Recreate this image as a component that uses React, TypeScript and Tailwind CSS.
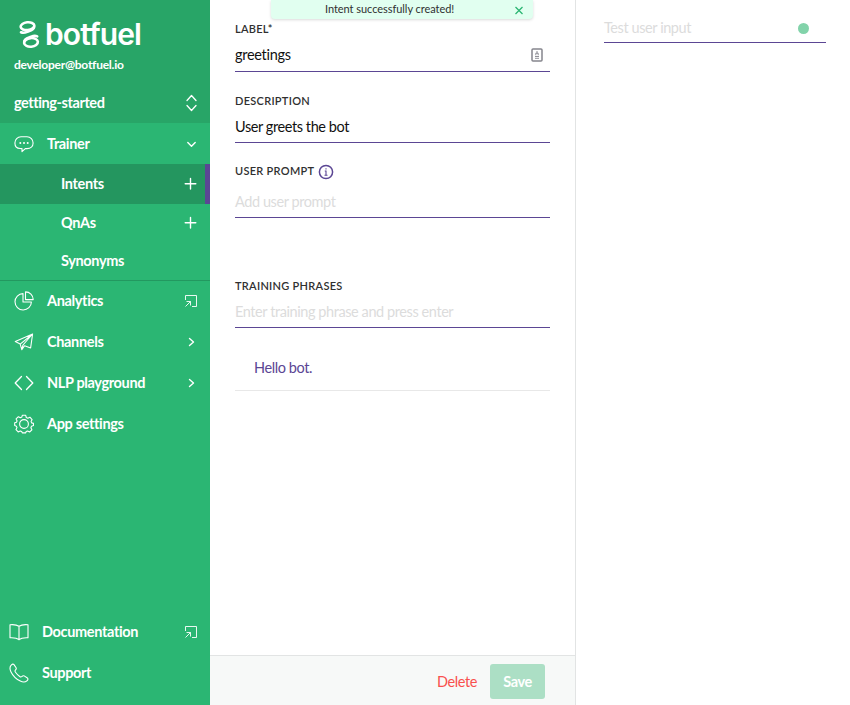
import type { ReactNode } from 'react';

const LATO = "font-['Lato',sans-serif]";

function Icon({ size = 20, view = 20, children, width = 1.1 }: { size?: number; view?: number; children: ReactNode; width?: number }) {
  return (
    <svg width={size} height={size} viewBox={`0 0 ${view} ${view}`} fill="none" stroke="currentColor" strokeWidth={width} strokeLinecap="round" strokeLinejoin="round" className="block shrink-0">
      {children}
    </svg>
  );
}

const Chat = () => (
  <Icon>
    <path d="M6.200 14.500C3 14.300.9 12 .9 8.900c0-3.500 2.600-6.100 6.100-6.100h6c3.500 0 6.100 2.600 6.100 6.100s-2.600 5.700-6.100 5.700h-1.700L8 17.700v-3.100z" />
    <path d="M6.300 8.900h.01M10 8.900h.01M13.700 8.900h.01" strokeWidth="2" />
  </Icon>
);
const Pie = () => (
  <Icon>
    <path d="M9 2.600A8.200 8.200 0 1 0 17.400 11H9z" />
    <path d="M11.500.9v7.700h7.700A7.700 7.700 0 0 0 11.500.9z" />
  </Icon>
);
const Plane = () => (
  <Icon>
    <path d="M18.600 2 1.300 9.600l4.900 2.500L18.600 2l-2 14-6-2.300-2.800 3.900-1.600-5.500M18.600 2 9 13l-1.200 4.600" />
  </Icon>
);
const Code = () => (
  <Icon width={1.3}>
    <path d="M7.500 3.500 1.200 10l6.300 6.500M12.500 3.500l6.300 6.500-6.300 6.500" />
  </Icon>
);
const Gear = () => (
  <Icon>
    <circle cx="10" cy="10" r="4.400" />
    <path d="M8.300 1.300h3.400l.6 2.200 1.500.7 2.100-1 2.200 2.400-1 2 .5 1.300 1.900.5v2.200l-2 .7-.6 1.400 1 2.100-2.300 2.200-2-1-1.400.6-.6 1.300H8.300l-.6-1.400-1.500-.6-2 1-2.200-2.300 1-2-.6-1.400-1.700-.6V8.800L2.500 8.300l.6-1.400-1-2L4.400 2.700l2 1 1.400-.6z" />
  </Icon>
);
const Book = () => (
  <Icon>
    <path d="M10 4.200C7.700 2.600 4.500 2.400 1 2.700v13.100c3.600-.2 6.900.1 9 1.900 2.100-1.800 5.400-2.100 9-1.900V2.700c-3.500-.3-6.700-.1-9 1.500zM10 4.200v13.500" />
  </Icon>
);
const Phone = () => (
  <Icon>
    <path d="M2.200 2.200C3.200 1 4.200.7 5 1.600l2.100 3.200c.6 1-.1 1.700-.8 2.500-.6.7-.3 1.300.2 2 1.100 1.600 2.500 3 4.200 4.200.7.500 1.300.7 2 .1.800-.7 1.500-1.300 2.500-.7l3.200 2.100c.9.700.6 1.800-.5 2.800-1.600 1.400-3.900 1.600-6.600.3C7 16 4 13 1.900 8.700 .6 6 .8 3.700 2.200 2.200z" />
  </Icon>
);
const External = () => (
  <Icon size={14} view={14} width={0.9}>
    <path d="M1.500 6V1.500h11v11H8M1.500 12.500l5-5M2.500 7.500h4v4" strokeLinecap="butt" strokeLinejoin="miter" />
  </Icon>
);
const Right = () => (
  <Icon size={14} view={14} width={1.4}>
    <path d="m5.500 3.500 4 3.500-4 3.500" />
  </Icon>
);
const Down = () => (
  <Icon size={14} view={14} width={1.4}>
    <path d="m3.800 5.500 3.700 3.700 3.700-3.700" />
  </Icon>
);
const Plus = () => (
  <Icon size={14} view={14} width={1.4}>
    <path d="M7.500 1.500v10.500M2.200 6.800h10.600" />
  </Icon>
);

function NavRow({ icon, label, end, className = 'pl-[14px] pb-[2px]' }: { icon: ReactNode; label: string; end?: ReactNode; className?: string }) {
  return (
    <div className={`flex h-[41px] items-center gap-[13px] pr-3 ${className}`}>
      {icon}
      <span className="flex-1 leading-5">{label}</span>
      {end}
    </div>
  );
}

function SubRow({ label, plus = false, active = false }: { label: string; plus?: boolean; active?: boolean }) {
  return (
    <div className={`flex items-center justify-between pl-[61px] ${active ? 'h-10 border-r-[5px] border-[#5b4694] bg-[#24965f] pr-2' : 'h-[38px] pr-[13px]'}`}>
      <span className="leading-5">{label}</span>
      {plus && <Plus />}
    </div>
  );
}

function Logo() {
  return (
    <div className="flex h-[30px] items-center">
      <svg width="22" height="30" viewBox="0 0 22 30" fill="none" stroke="#fff" strokeWidth="2.600" strokeLinecap="round" className="shrink-0">
        <ellipse cx="9.500" cy="7.200" rx="6.900" ry="3.900" transform="rotate(-6 9.500 7.200)" />
        <path d="M16.200 8c-.3 3.200-3.600 3.500-7 4.900-2.200.9-4.300 1.200-6.200.4" />
        <ellipse cx="13" cy="23.400" rx="6.900" ry="4.300" transform="rotate(-6 13 23.400)" />
        <path d="M6.200 22.600c.3-3.200 3.600-3.500 7-4.900 2.200-.9 4.200-1.100 6-.3" />
      </svg>
      <span className="ml-[5px] font-['Inter',sans-serif] text-[30px] leading-[30px] font-semibold tracking-[-0.9px]">botfuel</span>
    </div>
  );
}

function Sidebar() {
  return (
    <aside className="flex h-full w-[210px] shrink-0 flex-col bg-[#2bb673] text-[14.5px] font-bold tracking-[-0.35px] text-white">
      <header className="flex h-[123px] flex-col bg-[#28a567] pt-[19px]">
        <div className="pl-[18px]"><Logo /></div>
        <div className="mt-[8px] pl-[14px] text-[12px] leading-4 tracking-[-0.25px]">developer@botfuel.io</div>
        <div className="mt-5 flex items-center justify-between pr-3 pl-[14px] leading-5 tracking-[-0.42px]">
          <span>getting-started</span>
          <svg width="13" height="18" viewBox="0 0 13 18" fill="none" stroke="white" strokeWidth="1.300" strokeLinecap="round" strokeLinejoin="round"><path d="m2 6.500 4.500-5 4.500 5M2 11.500l4.500 5 4.500-5" /></svg>
        </div>
      </header>
      <nav>
        <NavRow icon={<Chat />} label="Trainer" end={<Down />} className="pl-[14px]" />
        <div className="h-[117px] border-b border-[#239860]">
          <SubRow label="Intents" plus active />
          <SubRow label="QnAs" plus />
          <SubRow label="Synonyms" />
        </div>
        <NavRow icon={<Pie />} label="Analytics" end={<External />} />
        <NavRow icon={<Plane />} label="Channels" end={<Right />} />
        <NavRow icon={<Code />} label="NLP playground" end={<Right />} />
        <NavRow icon={<Gear />} label="App settings" />
      </nav>
      <footer className="mt-auto pb-[11px]">
        <NavRow className="pb-px pl-[9px]" icon={<Book />} label="Documentation" end={<External />} />
        <NavRow className="pb-px pl-[9px]" icon={<Phone />} label="Support" />
      </footer>
    </aside>
  );
}

function Label({ children }: { children: ReactNode }) {
  return <div className="flex h-4 items-center gap-1 text-[11px] font-semibold tracking-[0.28px] text-[#303030]">{children}</div>;
}

function Field({ children, muted = false, className = 'mt-2 h-[27px]' }: { children: ReactNode; muted?: boolean; className?: string }) {
  return (
    <div className={`${className} flex items-start justify-between border-b border-[#5b4694] leading-5 ${muted ? 'text-[#dcdcdc]' : 'text-[#111]'}`}>
      {children}
    </div>
  );
}

export default function App() {
  return (
    <div className={`${LATO} flex h-[705px] w-[850px] overflow-hidden bg-white text-[14.5px] tracking-[-0.42px]`}>
      <Sidebar />
      <main className="relative flex h-full w-[366px] shrink-0 flex-col border-r border-[#e2e4e4]">
        <div className="absolute top-0 left-[61px] flex h-[19px] w-[262px] items-center rounded-b-[4px] bg-[#e1fff0] pr-2 pl-[54px] text-[11px] tracking-[-0.05px] text-[#303030] shadow-[0_1px_3px_rgba(0,0,0,0.15)]">
          <span className="flex-1 pb-[2px] leading-4">Intent successfully created!</span>
          <svg width="12" height="12" viewBox="0 0 12 12" fill="none" stroke="#2bb673" strokeWidth="1.300"><path d="m2.500 3 7 7M9.500 3l-7 7" /></svg>
        </div>
        <section className="flex-1 px-[25px] pt-[21px]">
          <Label>LABEL*</Label>
          <Field>
            <span className="tracking-[-0.3px]">greetings</span>
            <svg width="12" height="14" viewBox="0 0 12 14" fill="none" stroke="#85858d" className="mt-[3px] mr-[7px]"><rect x="1" y="1" width="10" height="12" rx="1" strokeWidth="1.500" /><path d="M6 3v2.500M4.800 7.300V5.200h2.400v2.100M4 8.500h4M4 10.300h4" strokeWidth="0.900" /></svg>
          </Field>
          <div className="mt-[21px]"><Label>DESCRIPTION</Label></div>
          <Field className="mt-2 h-[26px]"><span>User greets the bot</span></Field>
          <div className="mt-5">
            <Label>
              USER PROMPT
              <svg width="16" height="16" viewBox="0 0 16 16" fill="none" stroke="#5b4694" className="translate-y-px"><circle cx="8" cy="8" r="6.600" strokeWidth="1.500" /><path d="M6.800 7H8v4.300M6.500 11.300h3M8 4.200v1.300" strokeWidth="1.100" /></svg>
            </Label>
          </div>
          <Field muted className="mt-[13px] h-[26px]"><span>Add user prompt</span></Field>
          <div className="mt-[60px]"><Label>TRAINING PHRASES</Label></div>
          <Field muted className="mt-2 h-[26px]"><span>Enter training phrase and press enter</span></Field>
          <div className="mt-[30px] h-[33px] border-b border-[#e8e8e8] pl-[19px] leading-5 text-[#5b4694]">Hello bot.</div>
        </section>
        <footer className="flex h-[50px] items-center justify-end gap-[13px] border-t border-[#e2e4e4] bg-[#f7f9f8] pt-[2px] pr-[30px]">
          <span className="tracking-[-0.4px] text-[#f9504e]">Delete</span>
          <button className="h-[35px] w-[55px] rounded-[3px] bg-[#acdfc5] font-bold text-white">Save</button>
        </footer>
      </main>
      <aside className="flex-1 pt-[17px] pr-6 pl-7">
        <div className="flex h-[26px] items-start justify-between border-b border-[#5b4694] pr-[17px] leading-5 text-[#dcdcdc]">
          <span className="pt-px">Test user input</span>
          <span className="mt-[6px] size-[11px] rounded-full bg-[#82d3aa]" />
        </div>
      </aside>
    </div>
  );
}
